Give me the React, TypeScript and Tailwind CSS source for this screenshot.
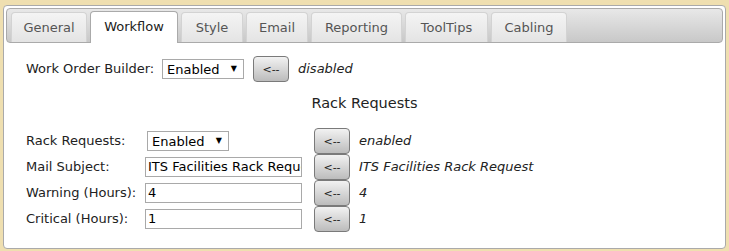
import React from "react";

const font = { fontFamily: '"DejaVu Sans", Verdana, sans-serif' };

function Tab({ label, active, w }: { label: string; active?: boolean; w: string }) {
  if (active) {
    return (
      <div className={`mb-[-1px] flex h-[32px] items-center justify-center rounded-t-[4px] border border-b-0 border-[#aaaaaa] bg-white pb-[1px] text-[13px] text-[#212121] ${w}`}>
        {label}
      </div>
    );
  }
  return (
    <div className={`flex h-[30px] items-center justify-center rounded-t-[4px] border border-b-0 border-[#d3d3d3] bg-gradient-to-b from-[#f4f4f4] to-[#e4e4e4] pt-[1px] text-[13px] text-[#555555] ${w}`}>
      {label}
    </div>
  );
}

function Select({ value }: { value: string }) {
  return (
    <div className="flex h-[20px] w-[82px] items-center justify-between border border-[#a9a9a9] bg-white pl-[4px] pr-[6px] text-[13px] text-black">
      <span className="leading-none">{value}</span>
      <span className="text-[8px] leading-none">▼</span>
    </div>
  );
}

function Btn() {
  return (
    <div className="flex h-[26px] w-[36px] items-center justify-center rounded-[4px] border border-[#7a7a7a] bg-gradient-to-b from-[#f2f2f2] to-[#bcbcbc] pt-[3px] text-[11px] text-[#222]">
      &lt;--
    </div>
  );
}

function Input({ value }: { value: string }) {
  return (
    <div className="flex h-[20px] w-[157px] items-center overflow-hidden whitespace-nowrap border border-[#a9a9a9] bg-white pl-[2px] text-[13px] text-black">
      {value}
    </div>
  );
}

function Row({ label, control, value }: { label: string; control: React.ReactNode; value: string }) {
  return (
    <div className="flex h-[26px] items-center">
      <div className="w-[119px] text-[13px] text-[#222]">{label}</div>
      <div className="w-[157px]">{control}</div>
      <div className="ml-[12px]">
        <Btn />
      </div>
      <div className="ml-[9px] text-[13px] italic text-[#222]">{value}</div>
    </div>
  );
}

export default function App() {
  return (
    <div className="h-[251px] bg-[#efdfb0] px-[3px] pb-[2px] pt-[5px]" style={font}>
      <div className="h-[244px] rounded-[4px] border border-[#aaaaaa] bg-white p-[2px]">
        <div className="flex h-[35px] items-end gap-[3px] rounded-[4px] border border-[#aaaaaa] bg-gradient-to-b from-[#e8e8e8] to-[#c8c8c8] pl-[4px]">
          <Tab label="General" w="w-[76px]" />
          <Tab label="Workflow" w="w-[88px]" active />
          <Tab label="Style" w="w-[62px]" />
          <Tab label="Email" w="w-[62px]" />
          <Tab label="Reporting" w="w-[91px]" />
          <Tab label="ToolTips" w="w-[83px]" />
          <Tab label="Cabling" w="w-[76px]" />
        </div>
        <div className="pl-[20px] pt-[13px]">
          <div className="flex h-[26px] items-center">
            <div className="w-[136px] text-[13px] text-[#222]">Work Order Builder:</div>
            <Select value="Enabled" />
            <div className="ml-[9px]">
              <Btn />
            </div>
            <div className="ml-[9px] text-[13px] italic text-[#222]">disabled</div>
          </div>
          <div className="mb-[14px] mt-[12px] flex h-[20px] items-center justify-center pr-[20px] text-[14.5px] text-[#222]">
            Rack Requests
          </div>
          <Row
            label="Rack Requests:"
            control={
              <div className="ml-[2px]">
                <Select value="Enabled" />
              </div>
            }
            value="enabled"
          />
          <Row label="Mail Subject:" control={<Input value="ITS Facilities Rack Request" />} value="ITS Facilities Rack Request" />
          <Row label="Warning (Hours):" control={<Input value="4" />} value="4" />
          <Row label="Critical (Hours):" control={<Input value="1" />} value="1" />
        </div>
      </div>
    </div>
  );
}
